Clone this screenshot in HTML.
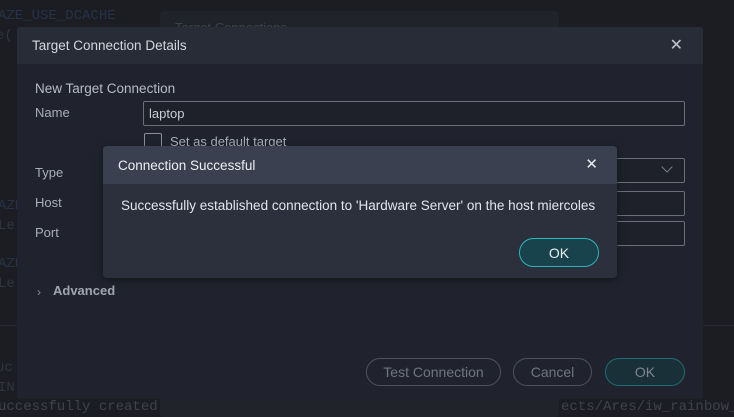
<!DOCTYPE html>
<html><head><style>
*{box-sizing:border-box;margin:0;padding:0}
body{width:734px;height:417px;overflow:hidden;background:#1b1d22;font-family:"Liberation Sans",sans-serif;position:relative;color:#c8ccd4}
.a{position:absolute}
.mono{font-family:"Liberation Mono",monospace;font-size:14px;color:#30353f;white-space:nowrap}
.lbl{font-size:13px;color:#a9aeb8}
.inp{border:1px solid #6a6e78;border-radius:2px;background:#1e2129}
.btn{border:1px solid #4f535c;border-radius:15px;font-size:14px;color:#6f7480;display:flex;align-items:center;justify-content:center}
</style></head><body>
<div class="a mono" style="left:-2px;top:8px;color:#26324a">AZE_USE_DCACHE</div>
<div class="a mono" style="left:-4px;top:28px">e(</div>
<div class="a mono" style="left:-2px;top:198px;color:#26324a">AZE</div>
<div class="a mono" style="left:-2px;top:218px">Le</div>
<div class="a mono" style="left:-2px;top:256px;color:#26324a">AZE</div>
<div class="a mono" style="left:-2px;top:276px">Le</div>
<div class="a mono" style="left:-4px;top:360px">uc</div>
<div class="a mono" style="left:-2px;top:380px">IN</div>
<div class="a mono" style="left:-2px;top:399px;color:#3d424c">uccessfully created</div>
<div class="a mono" style="left:561px;top:399px;color:#3d424c">ects/Ares/iw_rainbow_</div>
<div class="a" style="left:0;top:325px;width:734px;height:1px;background:#262930"></div>
<div class="a" style="left:160px;top:11px;width:399px;height:406px;background:#20232a;border-radius:4px"></div>
<div class="a" style="left:175px;top:20px;font-size:13px;color:#3c424d">Target Connections</div>
<!-- main dialog -->
<div class="a" style="left:17px;top:27px;width:686px;height:372px;background:#20232d;border-radius:3px;overflow:hidden">
 <div style="height:37px;background:#282c37;display:flex;align-items:center;padding-left:15px;font-size:13.5px;color:#d4d7de">Target Connection Details</div>
 <div class="a" style="right:20px;top:8px;font-size:16px;color:#c0c4cc">✕</div>
</div>
<div class="a lbl" style="left:35px;top:81px;font-size:13.5px;color:#b8bcc5">New Target Connection</div>
<div class="a lbl" style="left:35px;top:105px">Name</div>
<div class="a inp" style="left:143px;top:101px;width:542px;height:25px"></div>
<div class="a" style="left:149px;top:106px;font-size:13px;color:#c8ccd4">laptop</div>
<div class="a" style="left:144px;top:133px;width:18px;height:18px;border:1px solid #8a8e98;border-radius:2px"></div>
<div class="a" style="left:170px;top:134px;font-size:13px;color:#a9aeb8">Set as default target</div>
<div class="a lbl" style="left:35px;top:165px">Type</div>
<div class="a lbl" style="left:35px;top:195px">Host</div>
<div class="a lbl" style="left:35px;top:225px">Port</div>
<div class="a inp" style="left:600px;top:158px;width:85px;height:25px"></div>
<div class="a" style="left:663px;top:163px;width:8px;height:8px;border-right:1px solid #7a7e88;border-bottom:1px solid #7a7e88;transform:rotate(45deg)"></div>
<div class="a inp" style="left:600px;top:191px;width:85px;height:25px"></div>
<div class="a inp" style="left:600px;top:221px;width:85px;height:25px"></div>
<div class="a" style="left:37px;top:285px;font-size:12px;color:#8a8e98">›</div>
<div class="a" style="left:53px;top:283px;font-size:13px;font-weight:bold;color:#a0a5af">Advanced</div>
<div class="a btn" style="left:366px;top:358px;width:135px;height:28px">Test Connection</div>
<div class="a btn" style="left:513px;top:358px;width:79px;height:28px">Cancel</div>
<div class="a btn" style="left:605px;top:358px;width:80px;height:28px;border-color:#1f6e74;background:#1a3038;color:#7d8590">OK</div>
<!-- inner dialog -->
<div class="a" style="left:103px;top:146px;width:514px;height:132px;background:#2b303c;border-radius:4px;overflow:hidden;box-shadow:0 2px 8px rgba(0,0,0,.4)">
 <div style="height:38px;background:#3a404f;display:flex;align-items:center;padding-left:15px;font-size:13.5px;color:#eceef2">Connection Successful</div>
 <div class="a" style="right:19px;top:9px;font-size:15px;color:#e8eaee">✕</div>
 <div class="a" style="left:18px;top:52px;font-size:13.5px;color:#e2e5ea;white-space:nowrap">Successfully established connection to 'Hardware Server' on the host miercoles</div>
 <div class="a" style="left:416px;top:92px;width:80px;height:29px;border:1.5px solid #2ab5b8;border-radius:15px;background:#18434c;color:#e8eef0;font-size:14px;display:flex;align-items:center;justify-content:center">OK</div>
</div>
</body></html>
